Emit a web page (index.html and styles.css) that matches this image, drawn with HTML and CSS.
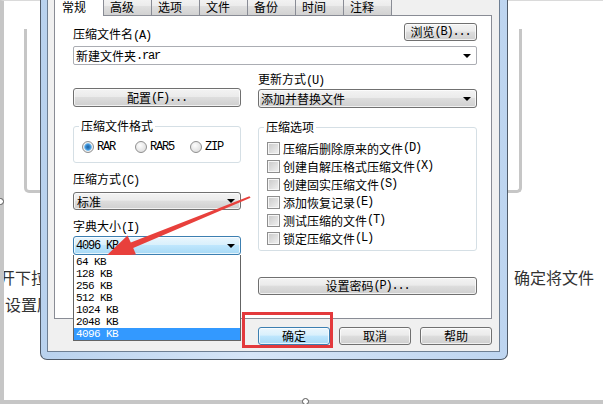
FILE: index.html
```html
<!DOCTYPE html>
<html lang="zh-CN">

<head>
    <meta charset="UTF-8">
    <title>压缩文件名和参数</title>
    <link rel="stylesheet" href="styles.css">
</head>

<body>
    <div class="page">
        <div class="frame"></div>
        <div class="para">
            <div class="line"><span class="cut">打开下拉菜单</span><span>确定将文件</span></div>
            <div class="line"><span class="second">设置压缩</span></div>
        </div>
    </div>
    <span class="knob knob-left"></span>
    <span class="knob knob-bottom"></span>

    <div class="win">
        <div class="client">
            <div class="tabs">
                <div class="tab on">常规</div>
                <div class="tab">高级</div>
                <div class="tab">选项</div>
                <div class="tab">文件</div>
                <div class="tab">备份</div>
                <div class="tab">时间</div>
                <div class="tab">注释</div>
            </div>
            <div class="panel">
                <div class="row-top">
                    <span class="lbl">压缩文件名<span class="en">(A)</span></span>
                    <div class="btn browse">浏览<span class="en">(B)...</span></div>
                </div>
                <div class="edit">新建文件夹<span class="en">.rar</span><i class="tri"></i></div>

                <div class="cols">
                    <div class="col">
                        <div class="btn cfg">配置<span class="en">(F)...</span></div>
                        <fieldset class="grp fmt">
                            <legend>压缩文件格式</legend>
                            <div class="radios">
                                <span class="ri w1"><i class="radio on"></i><span class="en">RAR</span></span>
                                <span class="ri w2"><i class="radio"></i><span class="en">RAR5</span></span>
                                <span class="ri"><i class="radio"></i><span class="en">ZIP</span></span>
                            </div>
                        </fieldset>
                        <div class="lbl method">压缩方式<span class="en">(C)</span></div>
                        <div class="combo method-box">标准<i class="tri"></i></div>
                        <div class="lbl dict-lbl">字典大小<span class="en">(I)</span></div>
                        <div class="dict">
                            <div class="combo focus"><span class="en">4096 KB</span><i class="tri"></i></div>
                            <ul class="list">
                                <li>64 KB</li>
                                <li>128 KB</li>
                                <li>256 KB</li>
                                <li>512 KB</li>
                                <li>1024 KB</li>
                                <li>2048 KB</li>
                                <li class="sel">4096 KB</li>
                            </ul>
                        </div>
                    </div>
                    <div class="col">
                        <div class="lbl update">更新方式<span class="en">(U)</span></div>
                        <div class="combo update-box">添加并替换文件<i class="tri"></i></div>
                        <fieldset class="grp opts">
                            <legend>压缩选项</legend>
                            <div class="chk"><i class="box"></i>压缩后删除原来的文件<span class="en">(D)</span></div>
                            <div class="chk"><i class="box"></i>创建自解压格式压缩文件<span class="en">(X)</span></div>
                            <div class="chk"><i class="box"></i>创建固实压缩文件<span class="en">(S)</span></div>
                            <div class="chk"><i class="box"></i>添加恢复记录<span class="en">(E)</span></div>
                            <div class="chk"><i class="box"></i>测试压缩的文件<span class="en">(T)</span></div>
                            <div class="chk"><i class="box"></i>锁定压缩文件<span class="en">(L)</span></div>
                        </fieldset>
                        <div class="btn pwd">设置密码<span class="en">(P)...</span></div>
                    </div>
                </div>
            </div>
            <div class="actions">
                <div class="btn act focus">确定</div>
                <div class="btn act">取消</div>
                <div class="btn act">帮助</div>
            </div>
        </div>
    </div>

    <div class="mark"></div>
    <svg class="arrow" width="603" height="404" viewBox="0 0 603 404">
        <polygon points="105,257 136,254.5 133.2,248 250.6,197.8 249.4,196.2 130.8,242.4 127.5,235.5" fill="#e8403c" />
    </svg>
</body>

</html>
```

FILE: styles.css
```css
html, body {
    margin: 0;
}

body {
    width: 603px;
    height: 404px;
    position: relative;
    overflow: hidden;
    background: #fff;
    font-family: "Noto Sans CJK SC", sans-serif;
    font-size: 12px;
    color: #000;
}

/* page behind the dialog */
.page {
    box-sizing: border-box;
    height: 404px;
    border-top: 1px solid #dadada;
    border-left: 4px solid #c6c6c6;
    border-bottom: 4px solid #c6c6c6;
    overflow: hidden;
}

.frame {
    box-sizing: border-box;
    width: 498px;
    height: 164px;
    margin: 28px 0 0 20px;
    border: 3px solid #c6c6c6;
    border-top: 0;
    border-radius: 0 0 5px 5px;
}

.para {
    margin-top: 71px;
    padding-right: 9px;
    font-size: 16px;
    line-height: 27px;
    color: #333;
}

.line {
    display: flex;
    justify-content: space-between;
    white-space: nowrap;
}

.cut {
    margin-left: -21px;
}

.second {
    margin-left: 1px;
}

.knob {
    position: absolute;
    width: 7px;
    height: 7px;
    box-sizing: border-box;
    border: 1px solid #555;
    border-radius: 50%;
    background: #fff;
}

.knob-left {
    left: -3px;
    top: 198px;
}

.knob-bottom {
    left: 302px;
    top: 398px;
}

/* dialog window */
.win {
    position: absolute;
    left: 40px;
    top: -10px;
    width: 468px;
    box-sizing: border-box;
    border: 1px solid #505b69;
    border-top: 0;
    border-radius: 0 0 7px 7px;
    background: linear-gradient(to right, #b9d2ee, #d6e5f7 45%, #bed5f0);
    padding: 0 7px 7px 6px;
}

.client {
    border: 1px solid #6e7f93;
    border-top: 0;
    background: #f0f0f0;
    padding: 0 7px 6px 6px;
}

.tabs {
    display: flex;
    align-items: flex-end;
    height: 25px;
    padding-left: 2px;
}

.tab {
    box-sizing: border-box;
    width: 49px;
    height: 18px;
    margin-left: -1px;
    padding-left: 6px;
    border: 1px solid #898c95;
    border-bottom: 0;
    border-radius: 2px 2px 0 0;
    background: linear-gradient(#f4f4f4, #ececec 45%, #dfdfdf 50%, #d2d2d2);
    line-height: 17px;
}

.tab.on {
    width: 50px;
    height: 21px;
    margin-left: -2px;
    margin-bottom: -1px;
    padding: 2px 0 0 7px;
    background: #fff;
    position: relative;
    z-index: 1;
}

.panel {
    box-sizing: border-box;
    height: 304px;
    border: 1px solid #898c95;
    background: #fff;
    padding: 7px 14px 0 18px;
}

.lbl {
    line-height: 14px;
    white-space: nowrap;
}

.en {
    font-family: "Liberation Mono", monospace;
    font-size: 12px;
    letter-spacing: -1.2px;
}

.row-top {
    display: flex;
    justify-content: space-between;
    align-items: flex-end;
    height: 18px;
}

.row-top .lbl {
    margin-bottom: -2px;
}

.btn {
    box-sizing: border-box;
    height: 18px;
    border: 1px solid #707070;
    border-radius: 3px;
    background: linear-gradient(#f3f3f3, #ebebeb 45%, #dddddd 50%, #cfcfcf);
    box-shadow: inset 0 0 0 1px rgba(255, 255, 255, 0.7);
    display: flex;
    align-items: center;
    justify-content: center;
    line-height: 14px;
    white-space: nowrap;
}

.btn.focus {
    border-color: #3c7fb1;
    background: linear-gradient(#eaf6fd, #d9f0fc 45%, #bee6fd 50%, #a7d9f5);
}

.browse {
    width: 73px;
}

.edit {
    box-sizing: border-box;
    height: 19px;
    margin-top: 5px;
    padding-left: 2px;
    border: 1px solid #abadb3;
    border-radius: 2px;
    background: #fff;
    display: flex;
    align-items: center;
}

.tri {
    width: 0;
    height: 0;
    margin-left: auto;
    margin-right: 5px;
    border-left: 4px solid transparent;
    border-right: 4px solid transparent;
    border-top: 4px solid #000;
}

.cols {
    display: grid;
    grid-template-columns: 168px 219px;
    column-gap: 17px;
}

.col {
    display: flex;
    flex-direction: column;
}

.combo {
    box-sizing: border-box;
    height: 18px;
    padding-left: 3px;
    border: 1px solid #707070;
    border-radius: 3px;
    background: linear-gradient(#f3f3f3, #ebebeb 45%, #dddddd 50%, #cfcfcf);
    box-shadow: inset 0 0 0 1px rgba(255, 255, 255, 0.7);
    display: flex;
    align-items: center;
    white-space: nowrap;
}

.combo.focus {
    height: 19px;
    padding-left: 2px;
    border-color: #3c7fb1;
    background: linear-gradient(#eaf6fd, #d9f0fc 45%, #bee6fd 50%, #a7d9f5);
}

/* left column */
.cfg {
    height: 19px;
    margin-top: 23px;
}

.grp {
    margin: 0;
    min-width: 0;
    border: 1px solid #d5dfe5;
    border-radius: 3px;
}

.grp legend {
    margin-left: -3px;
    padding: 0 2px;
    line-height: 14px;
}

.fmt {
    margin-top: 12px;
    padding: 7px 8px 8px;
}

.radios {
    display: flex;
    align-items: center;
    height: 14px;
}

.ri {
    display: flex;
    align-items: center;
}

.ri.w1 {
    width: 53px;
}

.ri.w2 {
    width: 55px;
}

.radio {
    box-sizing: border-box;
    width: 12px;
    height: 12px;
    margin-right: 3px;
    border: 1px solid #8f8f8f;
    border-radius: 50%;
    background: radial-gradient(circle at 40% 35%, #fdfdfd, #d6d6d6);
}

.radio.on {
    background: radial-gradient(circle, #1d5f9c 0, #3b8fd6 2.5px, #7fc0ee 3.5px, #f2f2f2 4.2px, #d6d6d6);
}

.method {
    margin-top: 9px;
}

.method-box {
    margin-top: 4px;
}

.dict-lbl {
    margin-top: 9px;
}

.dict {
    margin-top: 1px;
    position: relative;
}

.list {
    position: absolute;
    top: 100%;
    left: 0;
    right: 0;
    z-index: 2;
    margin: 0;
    padding: 1px 0 0;
    list-style: none;
    border: 1px solid #646464;
    border-top: 0;
    background: #fff;
}

.list li {
    height: 12px;
    padding-left: 2px;
    line-height: 12px;
    font-family: "Liberation Mono", monospace;
    font-size: 11px;
    letter-spacing: -0.6px;
    white-space: pre;
}

.list li.sel {
    background: #3399ff;
    color: #fff;
}

/* right column */
.update {
    margin-top: 7px;
}

.update-box {
    height: 19px;
    margin-top: 1px;
    padding-left: 2px;
}

.opts {
    margin-top: 12px;
    padding: 5px 8px 3px;
}

.chk {
    display: flex;
    align-items: center;
    height: 18px;
    white-space: nowrap;
}

.box {
    box-sizing: border-box;
    width: 13px;
    height: 13px;
    margin-right: 3px;
    border: 1px solid #8e8e8e;
    background: linear-gradient(135deg, #c8c8c8, #f2f2f2);
    box-shadow: inset 0 0 0 1px #f6f6f6;
}

.pwd {
    margin-top: 26px;
}

.actions {
    display: flex;
    justify-content: flex-end;
    gap: 9px;
    margin-top: 8px;
}

.act {
    width: 72px;
}

/* annotations */
.mark {
    position: absolute;
    left: 242px;
    top: 312px;
    width: 91px;
    height: 36px;
    box-sizing: border-box;
    border: 3px solid #e3393c;
}

.arrow {
    position: absolute;
    left: 0;
    top: 0;
    pointer-events: none;
}
```
